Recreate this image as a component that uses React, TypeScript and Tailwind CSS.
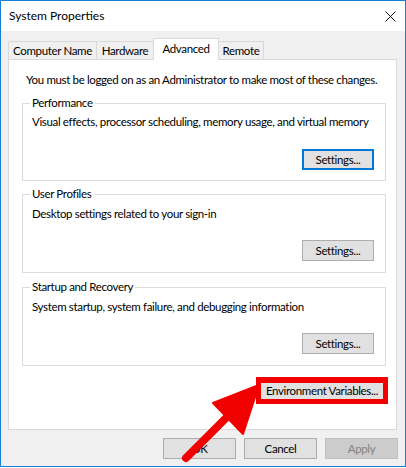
import React from "react";

const font = { fontFamily: 'Lato, Roboto, Arial, sans-serif' };

function Btn({
  label,
  focused = false,
  disabled = false,
  w = "w-[72px]",
}: {
  label: string;
  focused?: boolean;
  disabled?: boolean;
  w?: string;
}) {
  const cls = disabled
    ? "bg-[#cccccc] border border-[#bfbfbf] text-[#838383]"
    : focused
    ? "bg-[#e1e1e1] border-2 border-[#0078d7] text-black"
    : "bg-[#e1e1e1] border border-[#adadad] text-black";
  return (
    <div
      className={`${w} h-[21px] shrink-0 flex items-center justify-center whitespace-nowrap text-[11.5px] tracking-[-0.35px] leading-none ${cls}`}
    >
      {label}
    </div>
  );
}

function Group({
  title,
  desc,
  focused = false,
  h,
  pt,
  gap,
}: {
  title: string;
  desc: string;
  focused?: boolean;
  h: string;
  pt: string;
  gap: string;
}) {
  return (
    <div
      className={`relative ${h} ${pt} ml-[13px] mr-[10px] border border-[#dcdcdc] flex flex-col`}
    >
      <span className="absolute left-[7px] -top-[9px] bg-white px-[2px] whitespace-nowrap text-[11.5px] tracking-[-0.35px] leading-[16px] text-black">
        {title}
      </span>
      <div className="pl-[9px] whitespace-nowrap text-[11.5px] tracking-[-0.35px] leading-[16px] text-black">
        {desc}
      </div>
      <div className={`flex justify-end pr-[11px] ${gap}`}>
        <Btn label="Settings..." focused={focused} />
      </div>
    </div>
  );
}

function Tab({
  label,
  w,
  selected = false,
  first = false,
}: {
  label: string;
  w: string;
  selected?: boolean;
  first?: boolean;
}) {
  const base = `${w} shrink-0 ${first ? "" : "-ml-px"} border-l border-t border-r border-[#d9d9d9] flex justify-center whitespace-nowrap text-[11.5px] tracking-[-0.35px] text-black`;
  if (selected) {
    return (
      <div
        className={`${base} relative z-10 h-[22px] -mb-px bg-white items-start pt-[2px] leading-[16px]`}
      >
        {label}
      </div>
    );
  }
  return (
    <div className={`${base} h-[18px] bg-[#f0f0f0] items-center leading-[16px]`}>
      {label}
    </div>
  );
}

export default function App() {
  return (
    <div className="relative w-[406px] h-[468px] bg-white overflow-hidden" style={font}>
      <div className="w-[406px] h-[467px] border border-[#1a7fd4] bg-[#f0f0f0] flex flex-col">
        {/* title bar */}
        <div className="h-[30px] shrink-0 bg-white flex items-center justify-between pl-[8px] pr-[9px]">
          <span className="whitespace-nowrap text-[12px] leading-[16px] text-black">System Properties</span>
          <svg width="11" height="11" viewBox="0 0 11 11" className="mt-px">
            <path d="M0.5 0.5 L10.5 10.5 M10.5 0.5 L0.5 10.5" stroke="#111" strokeWidth="1" />
          </svg>
        </div>

        {/* body */}
        <div className="flex flex-col pl-[7px] pr-[8px] pt-[7px]">
          <div className="h-[21px] flex items-end">
            <Tab label="Computer Name" w="w-[89px]" first />
            <Tab label="Hardware" w="w-[58px]" />
            <Tab label="Advanced" w="w-[66px]" selected />
            <Tab label="Remote" w="w-[46px]" />
          </div>
          <div className="h-[371px] shrink-0 border border-[#d9d9d9] bg-white flex flex-col">
            <div className="pt-[12px] pl-[17px] whitespace-nowrap text-[11.5px] tracking-[-0.35px] leading-[16px] text-black">
              You must be logged on as an Administrator to make most of these changes.
            </div>
            <div className="mt-[15px]">
              <Group
                title="Performance"
                desc="Visual effects, processor scheduling, memory usage, and virtual memory"
                focused
                h="h-[78px]"
                pt="pt-[10px]"
                gap="mt-[19px]"
              />
            </div>
            <div className="mt-[13px]">
              <Group
                title="User Profiles"
                desc="Desktop settings related to your sign-in"
                h="h-[79px]"
                pt="pt-[11px]"
                gap="mt-[18px]"
              />
            </div>
            <div className="mt-[14px]">
              <Group
                title="Startup and Recovery"
                desc="System startup, system failure, and debugging information"
                h="h-[79px]"
                pt="pt-[11px]"
                gap="mt-[18px]"
              />
            </div>
            <div className="mt-[11px] flex justify-end mr-[8px]">
              <div className="border-[5px] border-t-[6px] border-[#f20000] bg-[#e1e1e1] w-[132px] h-[27px] flex items-center justify-center whitespace-nowrap text-[11.5px] tracking-[-0.35px] leading-none text-black">
                Environment Variables...
              </div>
            </div>
          </div>
        </div>

        {/* bottom buttons */}
        <div className="flex justify-end gap-[8px] pr-[7px] mt-[8px]">
          <Btn label="OK" w="w-[73px]" />
          <Btn label="Cancel" w="w-[73px]" />
          <Btn label="Apply" w="w-[73px]" disabled />
        </div>
      </div>

      {/* annotation arrow */}
      <svg
        className="absolute left-0 top-0 pointer-events-none"
        width="406"
        height="468"
        viewBox="0 0 406 468"
      >
        <line x1="186" y1="458" x2="232" y2="412" stroke="#f20000" strokeWidth="8" strokeLinecap="round" />
        <polygon points="213,403 259,385 243,434" fill="#f20000" stroke="#f20000" strokeWidth="2" strokeLinejoin="round" />
      </svg>
    </div>
  );
}
